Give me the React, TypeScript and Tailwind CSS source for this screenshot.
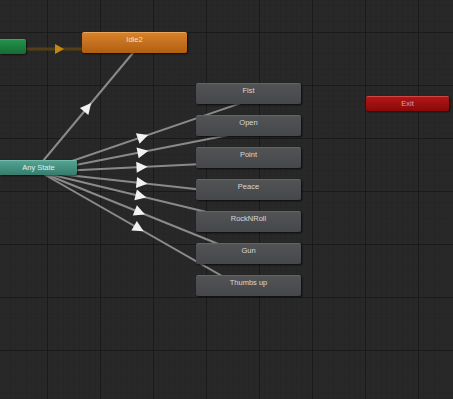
import React from 'react'

// Any State fan-out targets: node top, arrow centre, end point y (at x=248)
const states = [
  { label: 'Fist', top: 83, ax: 142, ay: 137, ey: 100.6 },
  { label: 'Open', top: 115, ax: 142, ay: 152, ey: 131.2 },
  { label: 'Point', top: 147, ax: 141, ay: 167, ey: 161.7 },
  { label: 'Peace', top: 179, ax: 141, ay: 183, ey: 194.7 },
  { label: 'RockNRoll', top: 211, ax: 140, ay: 196, ey: 222 },
  { label: 'Gun', top: 243, ax: 139, ay: 212, ey: 256 },
  { label: 'Thumbs up', top: 275, ax: 138, ay: 228, ey: 290.8 },
]

const SX = 40
const SY = 172

function Arrow({ x, y, angle, fill = '#f2f2f2' }: { x: number; y: number; angle: number; fill?: string }) {
  return (
    <polygon
      points="6.5,0 -4.5,-5.5 -4.5,5.5"
      fill={fill}
      transform={`translate(${x} ${y}) rotate(${angle})`}
    />
  )
}

function deg(dx: number, dy: number) {
  return (Math.atan2(dy, dx) * 180) / Math.PI
}

export default function App() {
  return (
    <div className="relative w-[453px] h-[399px] overflow-hidden bg-[#282828] font-['Liberation_Sans',Arial,sans-serif]">
      {/* grid + transitions */}
      <svg className="absolute inset-0" width="453" height="399">
        <defs>
          <pattern id="minor" x="47" y="32" width="5.3" height="5.3" patternUnits="userSpaceOnUse">
            <path d="M 0 0 L 5.3 0 M 0 0 L 0 5.3" stroke="#232323" strokeWidth="1" fill="none" />
          </pattern>
          <pattern id="major" x="47" y="32" width="53" height="53" patternUnits="userSpaceOnUse">
            <path d="M 0 0.5 L 53 0.5 M 0.5 0 L 0.5 53" stroke="#1a1a1a" strokeWidth="1" fill="none" />
          </pattern>
        </defs>
        <rect width="453" height="399" fill="url(#minor)" />
        <rect width="453" height="399" fill="url(#major)" />

        {/* entry -> Idle2 */}
        <line x1="26" y1="49" x2="82" y2="49" stroke="#524014" strokeWidth="3" />
        <polygon points="64,49 55,44 55,54" fill="#c4860e" />

        {/* Any State -> Idle2 */}
        <line x1="38" y1="167" x2="142" y2="42" stroke="#8a8a8a" strokeWidth="2" />
        <Arrow x={87} y={108} angle={deg(104, -125)} />

        {states.map((s) => (
          <g key={s.label}>
            <line x1={SX} y1={SY} x2={248} y2={s.ey} stroke="#8a8a8a" strokeWidth="2" />
            <Arrow x={s.ax} y={s.ay} angle={deg(248 - SX, s.ey - SY)} />
          </g>
        ))}
      </svg>

      {/* Entry (green) */}
      <div className="absolute left-0 top-[39px] w-[26px] h-[15px] rounded-r-[2px] bg-linear-to-b from-[#22914a] to-[#166b34] border-t border-[#3aa862] shadow-[1px_1px_2px_rgba(0,0,0,0.6)]" />

      {/* Idle2 */}
      <div className="absolute left-[82px] top-[32px] w-[105px] h-[21px] rounded-[2px] bg-linear-to-b from-[#d7812a] to-[#b05f10] border-t border-[#e8a55c] shadow-[1px_1px_2px_rgba(0,0,0,0.6)] text-center text-[7.5px] leading-none pt-[3px] text-[#f3e2d0]">
        Idle2
      </div>

      {/* Any State */}
      <div className="absolute left-0 top-[160px] w-[77px] h-[15px] rounded-r-[2px] bg-linear-to-b from-[#52a392] to-[#387c6d] border-t border-[#74bcae] shadow-[1px_1px_2px_rgba(0,0,0,0.6)] flex items-center justify-center text-[7.5px] leading-none text-[#e2efec]">
        Any State
      </div>

      {/* Exit */}
      <div className="absolute left-[366px] top-[96px] w-[83px] h-[15px] rounded-[2px] bg-linear-to-b from-[#b31616] to-[#8a0909] border-t border-[#cf4848] shadow-[1px_1px_2px_rgba(0,0,0,0.6)] flex items-center justify-center text-[7.5px] leading-none text-[#d9a3a3]">
        Exit
      </div>

      {/* states */}
      {states.map((s) => (
        <div
          key={s.label}
          className="absolute left-[196px] w-[105px] h-[21px] rounded-[2px] bg-linear-to-b from-[#525355] to-[#46474a] border-t border-[#636466] shadow-[1px_1px_2px_rgba(0,0,0,0.7)] text-center text-[7.5px] leading-none pt-[3px] text-[#d8d8d8]"
          style={{ top: s.top }}
        >
          {s.label}
        </div>
      ))}
    </div>
  )
}
